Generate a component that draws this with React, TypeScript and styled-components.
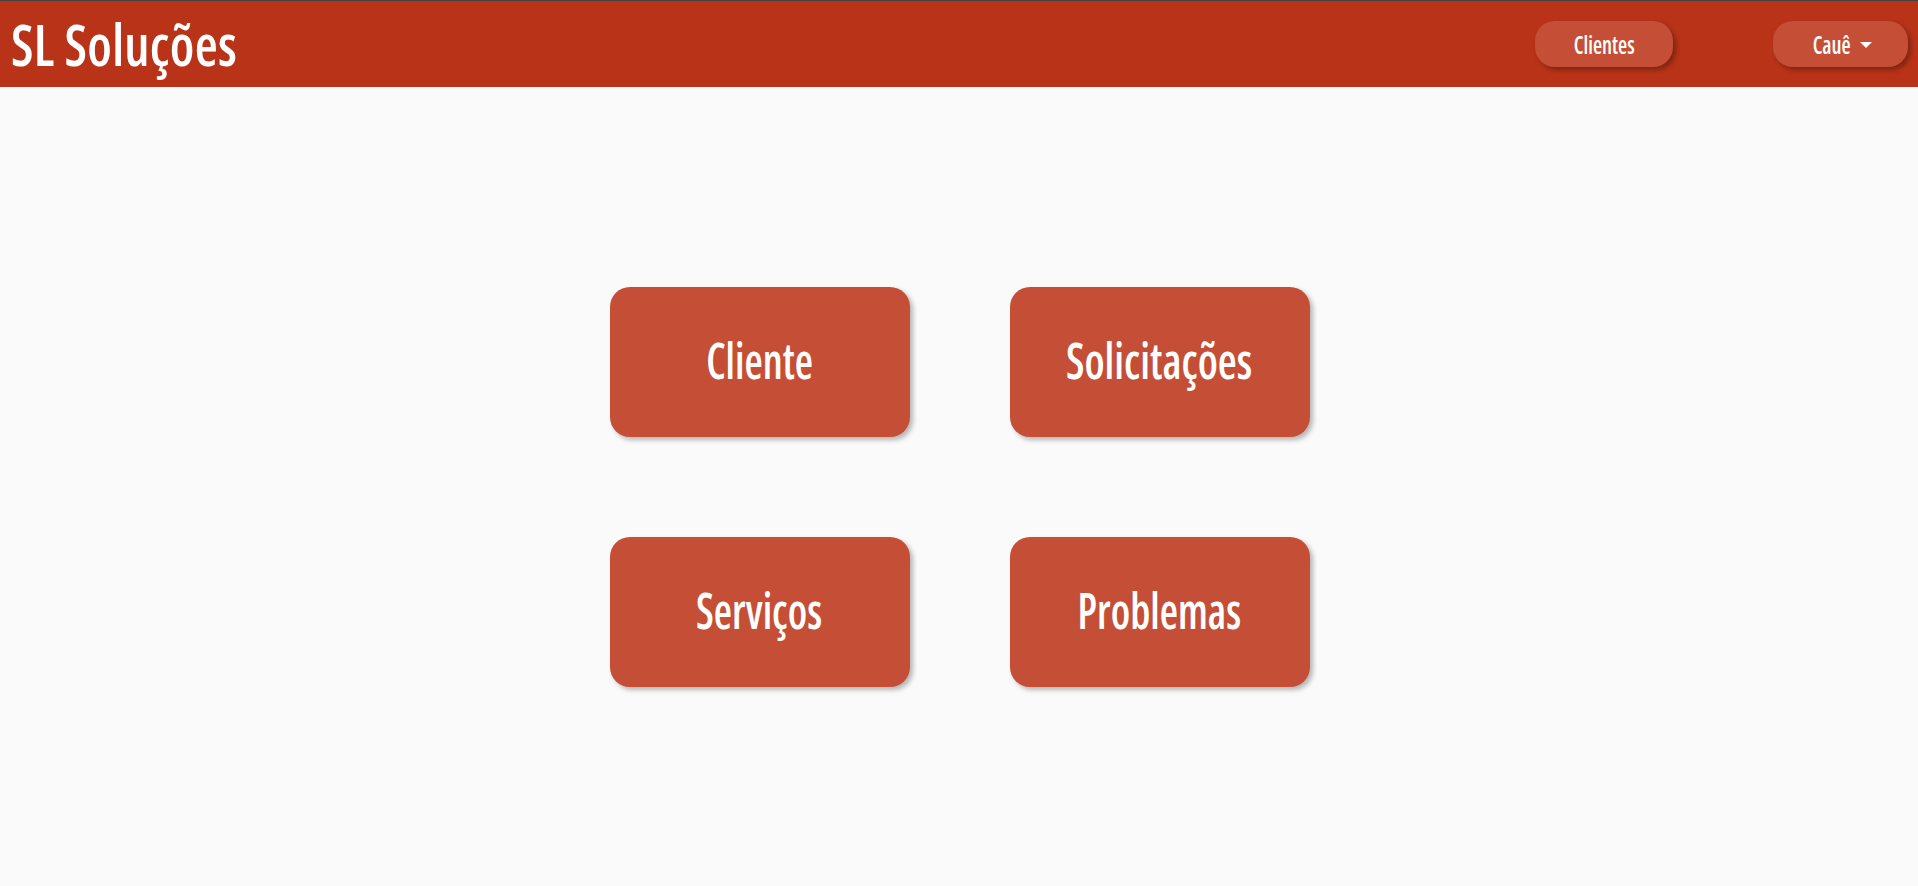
import React from "react";
import styled, { createGlobalStyle } from "styled-components";

const GlobalStyle = createGlobalStyle`
  html, body {
    margin: 0;
    padding: 0;
    background: #fafafa;
  }
  body {
    font-family: "Open Sans", "Liberation Sans", sans-serif;
    font-stretch: 75%;
    color: #fff;
  }
`;

const Page = styled.div`
  min-height: 886px;
  background: #fafafa;
`;

const Header = styled.header`
  height: 86px;
  border-top: 1px solid #454545;
  background: #b93318;
  display: flex;
  align-items: center;
  justify-content: space-between;
  padding: 0 10px 0 11px;
`;

const Narrow = styled.span<{ $scale?: number; $origin?: string }>`
  display: inline-block;
  transform: scaleX(${(p) => p.$scale ?? 0.84});
  transform-origin: ${(p) => p.$origin ?? "center"};
`;

const Brand = styled.h1`
  margin: 0;
  font-size: 57px;
  font-weight: 650;
  letter-spacing: 0.3px;
  line-height: 1;
  color: #fff;
`;

const Nav = styled.nav`
  display: flex;
  align-items: center;
  gap: 100px;
`;

const NavButton = styled.button<{ $width: number }>`
  width: ${(p) => p.$width}px;
  height: 46px;
  border: none;
  border-radius: 20px;
  background: #c54f36;
  box-shadow: 3px 3px 5px rgba(0, 0, 0, 0.3);
  color: #fff;
  font-family: inherit;
  font-stretch: 75%;
  font-weight: 600;
  font-size: 25px;
  display: flex;
  align-items: center;
  justify-content: center;
  gap: 6px;
  padding: 0;
  cursor: pointer;
`;

const Caret = styled.span`
  width: 0;
  height: 0;
  border-left: 6px solid transparent;
  border-right: 6px solid transparent;
  border-top: 6px solid #fff;
  margin-top: 2px;
`;

const Main = styled.main`
  display: grid;
  grid-template-columns: repeat(2, 300px);
  gap: 100px;
  justify-content: center;
  padding-top: 200px;
  padding-left: 1px;
`;

const Tile = styled.button`
  width: 300px;
  height: 150px;
  border: none;
  border-radius: 20px;
  background: #c54f36;
  box-shadow: 3px 3px 5px rgba(0, 0, 0, 0.28);
  color: #fff;
  font-family: inherit;
  font-stretch: 75%;
  font-weight: 600;
  font-size: 50px;
  display: flex;
  align-items: center;
  justify-content: center;
  padding: 0 0 4px;
  cursor: pointer;
`;

const tiles = ["Cliente", "Solicitações", "Serviços", "Problemas"];

export default function App() {
  return (
    <Page>
      <GlobalStyle />
      <Header>
        <Brand>
          <Narrow $scale={0.93} $origin="left center">
            SL Soluções
          </Narrow>
        </Brand>
        <Nav>
          <NavButton $width={138}>
            <Narrow>Clientes</Narrow>
          </NavButton>
          <NavButton $width={135}>
            <Narrow>Cauê</Narrow>
            <Caret />
          </NavButton>
        </Nav>
      </Header>
      <Main>
        {tiles.map((t) => (
          <Tile key={t}>
            <Narrow $scale={t === "Solicitações" ? 0.87 : 0.84}>{t}</Narrow>
          </Tile>
        ))}
      </Main>
    </Page>
  );
}
